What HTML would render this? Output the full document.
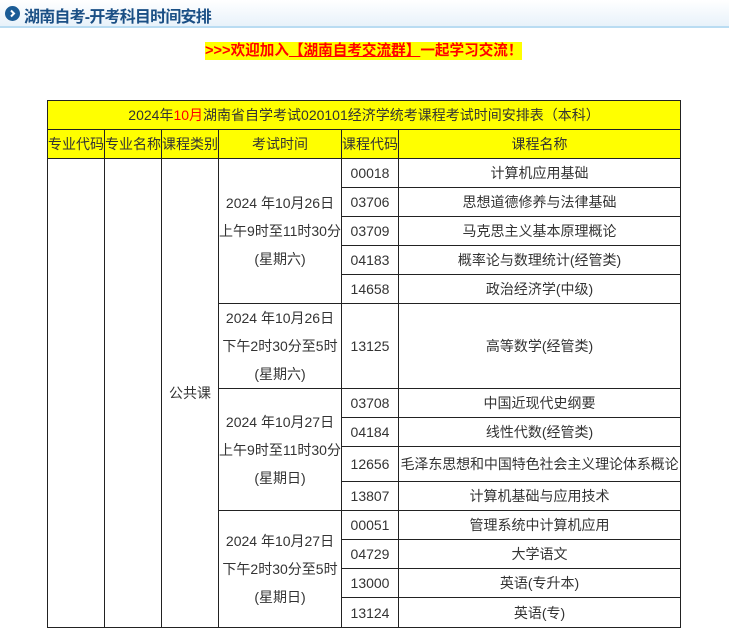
<!DOCTYPE html>
<html><head><meta charset="utf-8"><style>
body{margin:0;width:729px;height:629px;overflow:hidden;background:#fff;font-family:"Liberation Sans","Noto Sans CJK SC",sans-serif;color:#333;}
.bar{position:absolute;left:0;top:0;width:729px;height:26px;background:linear-gradient(#fff,#e8f2fa);border-bottom:2px solid #b9dcf2;}
.ic{position:absolute;left:5px;top:6px;width:15px;height:15px;border-radius:50%;background:#1b5c96;}
.ic svg{position:absolute;left:0;top:0}
.bt{position:absolute;left:24px;top:3px;font-size:16px;font-weight:bold;color:#1a4f85;letter-spacing:-0.8px;}
.ad{position:absolute;left:205px;top:42px;font-size:14.6px;font-weight:bold;color:#f00;background:#ff0;line-height:18px;}
.ad u{text-decoration:underline}
table{position:absolute;left:47px;top:100px;border-collapse:collapse;table-layout:fixed;width:633px;font-size:14px;}
td{border:1px solid #222;text-align:center;padding:0;white-space:nowrap;overflow:hidden;line-height:16px;}
.y td{background:#ff0;}
.t{line-height:28px}
</style></head><body>
<div class="bar"><div class="ic"><svg width="15" height="15"><path d="M6 4.5L9 7.5L6 10.5" stroke="#fff" stroke-width="2" fill="none"/></svg></div><div class="bt">湖南自考-开考科目时间安排</div></div>
<div class="ad">&gt;&gt;&gt;欢迎加入<u>【湖南自考交流群】</u>一起学习交流！</div>
<table>
<colgroup><col style="width:57px"><col style="width:57px"><col style="width:57px"><col style="width:123px"><col style="width:57px"><col style="width:282px"></colgroup>
<tr class="y" style="height:29px"><td colspan="6">2024年<span style="color:#f00">10月</span>湖南省自学考试020101经济学统考课程考试时间安排表（本科）</td></tr>
<tr class="y" style="height:29px"><td>专业代码</td><td>专业名称</td><td>课程类别</td><td>考试时间</td><td>课程代码</td><td>课程名称</td></tr>
<tr style="height:29px"><td rowspan="14"></td><td rowspan="14"></td><td rowspan="14">公共课</td><td rowspan="5" class="t">2024 年10月26日<br>上午9时至11时30分<br>(星期六)</td><td>00018</td><td>计算机应用基础</td></tr>
<tr style="height:29px"><td>03706</td><td>思想道德修养与法律基础</td></tr>
<tr style="height:29px"><td>03709</td><td>马克思主义基本原理概论</td></tr>
<tr style="height:29px"><td>04183</td><td>概率论与数理统计(经管类)</td></tr>
<tr style="height:29px"><td>14658</td><td>政治经济学(中级)</td></tr>
<tr style="height:85px"><td class="t">2024 年10月26日<br>下午2时30分至5时<br>(星期六)</td><td>13125</td><td>高等数学(经管类)</td></tr>
<tr style="height:29px"><td rowspan="4" class="t">2024 年10月27日<br>上午9时至11时30分<br>(星期日)</td><td>03708</td><td>中国近现代史纲要</td></tr>
<tr style="height:29px"><td>04184</td><td>线性代数(经管类)</td></tr>
<tr style="height:35px"><td>12656</td><td style="letter-spacing:-0.1px">毛泽东思想和中国特色社会主义理论体系概论</td></tr>
<tr style="height:29px"><td>13807</td><td>计算机基础与应用技术</td></tr>
<tr style="height:29px"><td rowspan="4" class="t">2024 年10月27日<br>下午2时30分至5时<br>(星期日)</td><td>00051</td><td>管理系统中计算机应用</td></tr>
<tr style="height:29px"><td>04729</td><td>大学语文</td></tr>
<tr style="height:29px"><td>13000</td><td>英语(专升本)</td></tr>
<tr style="height:30px"><td>13124</td><td>英语(专)</td></tr>
</table>
</body></html>
